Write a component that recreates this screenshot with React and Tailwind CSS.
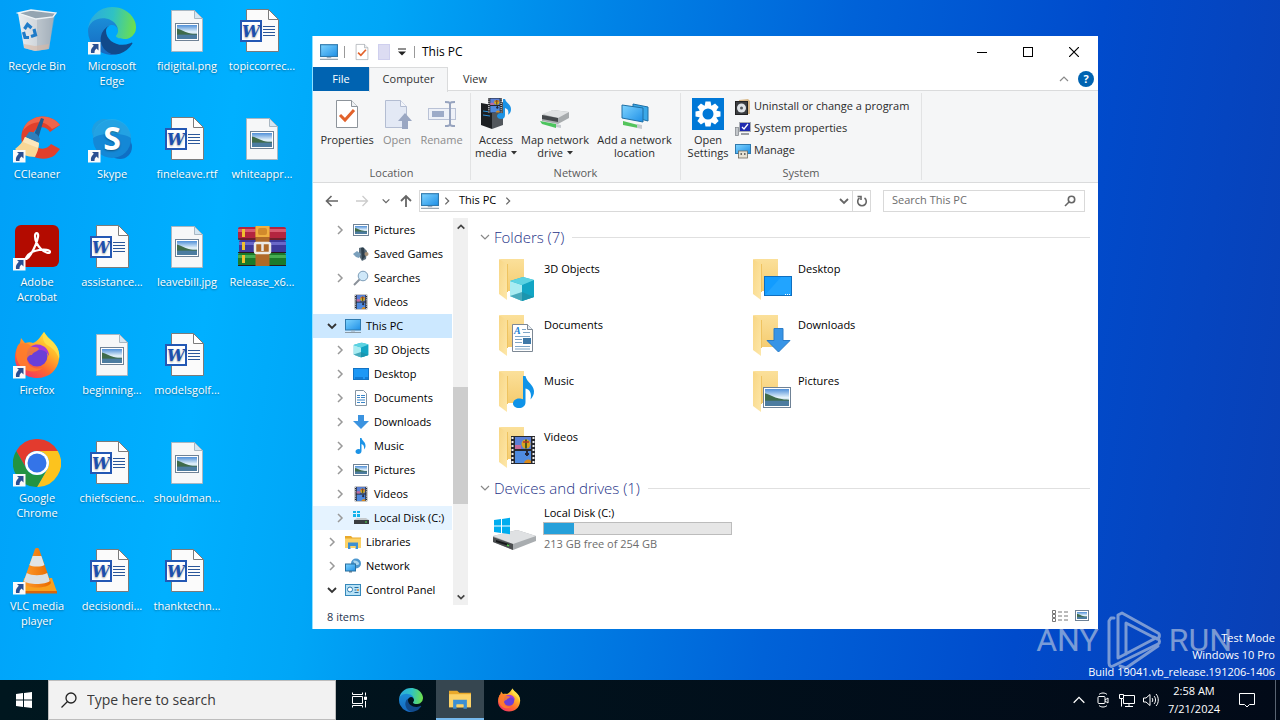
import React, { useState } from "react";

// ── Shared gradients ────────────────────────────────────────────────────────
function Gradients() {
  return (
    <svg width="0" height="0" className="absolute" aria-hidden="true">
      <defs>
        <linearGradient id="screen" x1="0" y1="0" x2="1" y2="1">
          <stop offset="0" stopColor="#7fd4ff" />
          <stop offset="1" stopColor="#1e8fe6" />
        </linearGradient>
        <linearGradient id="sky" x1="0" y1="0" x2="0" y2="1">
          <stop offset="0" stopColor="#4f8fd8" />
          <stop offset="0.5" stopColor="#e4f2fa" />
          <stop offset="1" stopColor="#7fa6c8" />
        </linearGradient>
        <linearGradient id="edgeGreen" x1="0" y1="0.4" x2="1" y2="0.5">
          <stop offset="0" stopColor="#2ba9e0" />
          <stop offset="0.5" stopColor="#2fc2c4" />
          <stop offset="1" stopColor="#6ee04a" />
        </linearGradient>
        <linearGradient id="edgeBlue" x1="0.5" y1="0" x2="0.5" y2="1">
          <stop offset="0" stopColor="#1b8fd8" />
          <stop offset="1" stopColor="#1668c0" />
        </linearGradient>
        <linearGradient id="fox" x1="0.9" y1="0" x2="0.2" y2="1">
          <stop offset="0" stopColor="#fff44f" />
          <stop offset="0.35" stopColor="#ffb52a" />
          <stop offset="0.65" stopColor="#ff6a2e" />
          <stop offset="1" stopColor="#f0306a" />
        </linearGradient>
        <linearGradient id="folderFront" x1="0" y1="0" x2="1" y2="1">
          <stop offset="0" stopColor="#f8d684" />
          <stop offset="1" stopColor="#fde7aa" />
        </linearGradient>
        <linearGradient id="folderBack" x1="0" y1="0" x2="0" y2="1">
          <stop offset="0" stopColor="#fbe09a" />
          <stop offset="1" stopColor="#f5cc70" />
        </linearGradient>
        <linearGradient id="bin" x1="0" y1="0" x2="1" y2="0">
          <stop offset="0" stopColor="#e9edf0" />
          <stop offset="0.6" stopColor="#cdd3d9" />
          <stop offset="1" stopColor="#a4b0bb" />
        </linearGradient>
        <linearGradient id="cone" x1="0" y1="0" x2="1" y2="0">
          <stop offset="0" stopColor="#ff9a2a" />
          <stop offset="1" stopColor="#e86a00" />
        </linearGradient>
      </defs>
    </svg>
  );
}

// ── Desktop icons (48 × 48) ─────────────────────────────────────────────────
function Shortcut() {
  return (
    <g>
      <rect x="0" y="35" width="12.5" height="12.5" fill="#fafafa" />
      <path d="M4 37h6.500v6.500L8.500 41.500C6.500 43 6.500 44.500 6.500 46H3c-.5-3 .5-5 2.800-7.200z" fill="#2a4f92" />
    </g>
  );
}

function RecycleIcon() {
  return (
    <svg viewBox="0 0 48 48" className="size-12">
      <path d="M5 6l36 2-5 34-14 2-11-3z" fill="url(#bin)" />
      <path d="M24 10l18-2-6 34-12 2z" fill="#9fadb8" opacity="0.45" />
      <path d="M5 6L18 3l25 3-3 4-17 2z" fill="#94a5b2" stroke="#eef3f6" strokeWidth="1.3" />
      <path d="M11 37l11 2 14-2-1 5-13 2-11-3z" fill="#d9b7a4" opacity="0.6" />
      <g fill="none" stroke="#1f7bc8" strokeWidth="3.2">
        <path d="M11.500 22l3-4.500 4 3.500" />
        <path d="M21 22l1.500 6-4.500 1.500" />
        <path d="M16 30.500h-4l-1.500-5.500" />
      </g>
    </svg>
  );
}

function EdgeIcon({ shortcut, className = "size-12" }) {
  return (
    <svg viewBox="0 0 48 48" className={className}>
      <g transform="scale(0.1875)">
        <path d="M231 190.500c-3.400 1.800-6.900 3.400-10.500 4.700a101.500 101.500 0 0 1-35.900 6.500c-47.300 0-88.500-32.500-88.500-74.300 0.100-11.400 6.300-21.900 16.300-27.400-42.800 1.800-53.800 46.400-53.800 72.500 0 74 68.100 81.400 82.800 81.400 7.900 0 19.800-2.300 27-4.600l1.300-.4a128.300 128.300 0 0 0 66.600-52.800 4 4 0 0 0-5.300-5.600z" fill="#114a8b" />
        <path d="M105.700 241.400a79.200 79.200 0 0 1-22.700-21.300 80.700 80.700 0 0 1 29.500-120c3.200-1.500 8.500-4.100 15.600-4a32.400 32.400 0 0 1 25.700 13 31.900 31.900 0 0 1 6.300 18.700c0-.2 24.500-79.600-80-79.600-43.900 0-80 41.700-80 78.200a130.200 130.200 0 0 0 12.100 56 128 128 0 0 0 156.400 67.100 75.600 75.600 0 0 1-62.800-8z" fill="url(#edgeBlue)" />
        <path d="M152.300 148.900c-.8 1-3.300 2.500-3.300 5.700 0 2.600 1.700 5.100 4.700 7.200 14.400 10 41.500 8.700 41.600 8.700 10.700 0 21.100-2.900 30.300-8.300A61.400 61.400 0 0 0 256 109.400c.3-22.400-8-37.300-11.300-43.900C223.500 23.900 177.700 0 128 0A128 128 0 0 0 0 126.200c.5-36.500 36.800-66 80-66 3.500 0 23.500.3 42 10 16.300 8.600 24.900 18.900 30.800 29.200 6.200 10.700 7.300 24.100 7.300 29.500s-2.700 13.300-7.800 20z" fill="url(#edgeGreen)" />
      </g>
      {shortcut && <Shortcut />}
    </svg>
  );
}

function CCleanerIcon() {
  return (
    <svg viewBox="0 0 48 48" className="size-12">
      <path d="M47 10C40 1 27-1 18 5 8 11 6 24 11 33c6 11 22 14 31 7l5-6-9-5c-4 6-12 6-16 1-4-5-3-13 2-16 4-3 10-2 13 3z" fill="#e0402c" />
      <path d="M47 10C40 1 27-1 18 5c-4 2-7 6-8 11 6-9 20-13 29-2z" fill="#f0654a" />
      <path d="M28 3l3 1-6 20-5-2z" fill="#1d5c92" />
      <path d="M16 17c4-1 9 2 11 7l-3 5-12-6z" fill="#2f7fbb" />
      <path d="M12 22l14 6c0 5-2 10-4 14-8 0-15-3-20-8 4-3 8-7 10-12z" fill="#f8d796" />
      <path d="M12 22l14 6-1 5-15-6z" fill="#fbe7bd" />
      <Shortcut />
    </svg>
  );
}

function SkypeIcon() {
  return (
    <svg viewBox="0 0 48 48" className="size-12">
      <circle cx="16" cy="16" r="12" fill="#1f9fe0" />
      <circle cx="32" cy="32" r="12" fill="#0f6fc4" />
      <circle cx="24" cy="24" r="19" fill="#1488d6" />
      <path d="M5 23a19 19 0 0 1 38 0c-9-6-29-6-38 0z" fill="#2aaee8" opacity="0.7" />
      <text x="24" y="35" textAnchor="middle" fontFamily="Open Sans, sans-serif" fontWeight="700" fontSize="32" fill="#fff">S</text>
      <Shortcut />
    </svg>
  );
}

function AcrobatIcon() {
  return (
    <svg viewBox="0 0 48 48" className="size-12">
      <rect x="2" y="2" width="44" height="42" rx="6" fill="#b30b00" />
      <path d="M13 35c2-4 7-7 13-8s11 0 11 2-5 1-9-3-6-9-6-13 4-4 3 1-4 12-7 17-6 6-5 4z" fill="none" stroke="#fff" strokeWidth="2.2" strokeLinejoin="round" />
      <Shortcut />
    </svg>
  );
}

function FirefoxIcon({ shortcut, className = "size-12" }) {
  return (
    <svg viewBox="0 0 48 48" className={className}>
      <path d="M31 1c2 4 6 7 9 10 5 5 7 11 6 17-1 11-10 19-22 19S2 38 2 27c0-6 2-12 5-15l1-5 4 5c3-1 6-1 8 0 5-2 7-6 11-11z" fill="url(#fox)" />
      <circle cx="24" cy="25" r="10.500" fill="#6a3fd8" />
      <path d="M14 20c3-6 10-8 16-5 4 2 6 6 6 10-2-4-5-6-8-6z" fill="#a33bd6" />
      <path d="M5 14c5-3 11-2 14 2 3 0 6 0 7 2-2 3-6 3-7 6-3 0-5 2-5 5 1 7 9 10 16 8-8 6-21 4-25-6-3-6-2-12 0-17z" fill="#ff7f2c" opacity="0.85" />
      <path d="M31 1c2 4 6 7 9 10 5 5 7 11 6 17-3-9-7-11-12-14-4-3-5-8-3-13z" fill="#ffe14a" opacity="0.85" />
      {shortcut && <Shortcut />}
    </svg>
  );
}

function ChromeIcon() {
  const blade = "M24 12H44.800A24 24 0 0 0 3.200 12L13.600 30A12 12 0 0 1 24 12z";
  return (
    <svg viewBox="0 0 48 48" className="size-12">
      <path d={blade} fill="#e33b2e" />
      <path d={blade} fill="#fcc31e" transform="rotate(120 24 24)" />
      <path d={blade} fill="#229342" transform="rotate(240 24 24)" />
      <circle cx="24" cy="24" r="12" fill="#fff" />
      <circle cx="24" cy="24" r="9.500" fill="#3474e8" />
      <Shortcut />
    </svg>
  );
}

function VlcIcon() {
  return (
    <svg viewBox="0 0 48 48" className="size-12">
      <path d="M11 31h28l5 14H9z" fill="#f9a01e" />
      <path d="M9 44h35v2.500H9z" fill="#d9660a" />
      <path d="M22 2c0-1.500 4-1.500 4 0l12 34c-3 6-25 6-28 0z" fill="url(#cone)" />
      <path d="M19.600 9h8.800l3 9c-3 2-12 2-15 0z" fill="#e2e5e6" />
      <path d="M13.800 26c5 3 15 3 20.400 0l2.600 8c-4 4-22 4-26 0z" fill="#dcdfe0" />
      <Shortcut />
    </svg>
  );
}

function RarIcon() {
  return (
    <svg viewBox="0 0 48 48" className="size-12">
      <rect x="0" y="4" width="48" height="13" rx="2" fill="#b3253f" />
      <rect x="0" y="6" width="48" height="3" fill="#d75a70" />
      <rect x="1" y="17" width="47" height="13" rx="2" fill="#3d3a9c" />
      <rect x="1" y="19" width="47" height="3" fill="#6a68c8" />
      <rect x="0" y="30" width="48" height="13" rx="2" fill="#1b7a2a" />
      <rect x="0" y="32" width="48" height="3" fill="#46ad52" />
      <path d="M0 16h48M0 29.500h48M0 42.500h48" stroke="#2a1a1a" strokeWidth="1" />
      <path d="M4 6h3v8H4zM4 19h3v8H4zM4 32h3v8H4z" fill="#f0c030" />
      <rect x="17.500" y="3" width="14" height="40" fill="#b06a28" />
      <path d="M17.500 3h14v11h-14z" fill="#f0b040" />
      <rect x="20" y="5" width="9" height="7" rx="2" fill="#d18a2c" />
      <rect x="17" y="20" width="15" height="10" rx="1.500" fill="none" stroke="#ecebe6" strokeWidth="2.500" />
      <path d="M24.500 20v8" stroke="#e8e8e8" strokeWidth="2.500" />
    </svg>
  );
}

function Landscape({ x, y, w, h }) {
  return (
    <g>
      <rect x={x} y={y} width={w} height={h} fill="#fff" stroke="#6f8296" strokeWidth="1" />
      <svg x={x + 1.5} y={y + 1.5} width={w - 3} height={h - 3} viewBox="0 0 24 16" preserveAspectRatio="none">
        <rect width="24" height="16" fill="url(#sky)" />
        <path d="M0 4c5 1 9 4 14 5 4 1 6 1 10 1v2H0z" fill="#3f6b4a" />
        <path d="M0 11h24v5H0z" fill="#4c7ca0" />
      </svg>
    </g>
  );
}

function ImageFileIcon() {
  return (
    <svg viewBox="0 0 48 48" className="size-12">
      <path d="M8.500 3.500h23l8 8v33h-31z" fill="#f6f7f8" stroke="#a9b7c2" />
      <path d="M31.500 3.500v8h8z" fill="#d5e6f2" stroke="#a9b7c2" />
      <Landscape x={12.5} y={16.5} w={23} h={17} />
    </svg>
  );
}

function WordFileIcon() {
  return (
    <svg viewBox="0 0 48 48" className="size-12">
      <path d="M8.500 2.500h22l10 10v32h-32z" fill="#fbfbfb" stroke="#7b7b7b" />
      <path d="M30.500 2.500v10h10z" fill="#fff" stroke="#7b7b7b" />
      <path d="M25 19.500h12M25 22.500h12M25 25.500h12M25 28.500h12" stroke="#2b579a" strokeWidth="1" />
      <rect x="3" y="14" width="20" height="20" fill="#fff" stroke="#2458b4" strokeWidth="2" />
      <text x="13" y="30" textAnchor="middle" fontFamily="DejaVu Serif, serif" fontStyle="italic" fontWeight="bold" fontSize="16" fill="#1d4fae">W</text>
    </svg>
  );
}

// ── Small icons (16 × 16) ───────────────────────────────────────────────────
function PcIcon({ className = "size-4" }) {
  return (
    <svg viewBox="0 0 16 16" className={className}>
      <rect x="0.500" y="1.500" width="15" height="10.500" fill="url(#screen)" stroke="#2f79ad" />
      <path d="M6 12.500h4v1H6z" fill="#9ab" />
      <path d="M0 14.500h16" stroke="#8a9aa6" />
    </svg>
  );
}

function PicturesSmall() {
  return (
    <svg viewBox="0 0 16 16" className="size-4">
      <Landscape x={0.5} y={2.5} w={15} h={11} />
    </svg>
  );
}

function GamesSmall() {
  return (
    <svg viewBox="0 0 16 16" className="size-4">
      <path d="M6 2l4-1 4 4-1 8-4 2-3-5z" fill="#5d6f7c" />
      <path d="M8 2h3l1 9-3 3z" fill="#2e3f4c" />
      <path d="M0 8l4-3 4 3-2 4-3-1z" fill="#7ba0bc" />
      <circle cx="13.500" cy="8" r="2" fill="#a58f76" />
    </svg>
  );
}

function SearchesSmall() {
  return (
    <svg viewBox="0 0 16 16" className="size-4">
      <path d="M1 15l6-6" stroke="#8a9099" strokeWidth="2" />
      <circle cx="10" cy="6" r="4.800" fill="#cfe8f9" stroke="#7d9db8" />
    </svg>
  );
}

function Film({ x, y, w, h }) {
  return (
    <svg x={x} y={y} width={w} height={h} viewBox="0 0 24 28" preserveAspectRatio="none">
      <rect width="24" height="28" fill="#26282e" />
      <path d="M1.500 1v26M22.500 1v26" stroke="#f0f0f0" strokeWidth="2" strokeDasharray="2 2" />
      <rect x="4" y="1" width="16" height="12" fill="#5a7fd6" />
      <rect x="4" y="15" width="16" height="12" fill="#4f8be0" />
      <circle cx="15" cy="8" r="4.500" fill="#d9a520" />
      <path d="M15 3.500v9" stroke="#4a5a1c" strokeWidth="2" />
      <path d="M12 6h6" stroke="#b5342c" strokeWidth="1.500" />
      <path d="M4 9h6v4H4z" fill="#c46a9a" />
      <path d="M13 27a4 4 0 0 1 7-2v2z" fill="#d98a1c" />
      <path d="M16 15v5M14 18h4" stroke="#23263c" strokeWidth="2" />
    </svg>
  );
}

function FilmSmall() {
  return (
    <svg viewBox="0 0 16 16" className="size-4">
      <Film x={1.5} y={0.5} w={13} h={15} />
    </svg>
  );
}

function Cube({ x, y, s }) {
  return (
    <svg x={x} y={y} width={s} height={s} viewBox="0 0 24 24">
      <path d="M0 4l13-4 11 3v17l-12 4-12-5z" fill="#26b4cd" />
      <path d="M0 4l12 4v16L0 19z" fill="#a8ecf2" />
      <path d="M12 8l12-5v17l-12 4z" fill="#12a5c4" />
      <path d="M0 4l13-4 11 3-12 5z" fill="#5cd3e2" />
      <path d="M0 19l12-4 12 5-12 4z" fill="#1f8fa5" opacity="0.7" />
    </svg>
  );
}

function CubeSmall() {
  return (
    <svg viewBox="0 0 16 16" className="size-4">
      <Cube x={0.5} y={0.5} s={15} />
    </svg>
  );
}

function DesktopSmall() {
  return (
    <svg viewBox="0 0 16 16" className="size-4">
      <rect x="0.500" y="2.500" width="15" height="11" fill="#1d98f5" stroke="#1272c4" />
      <path d="M2 12h8M12 12h3" stroke="#0b5eb0" />
    </svg>
  );
}

function DocumentSmall() {
  return (
    <svg viewBox="0 0 16 16" className="size-4">
      <path d="M2.500.5h8l3 3v12h-11z" fill="#fff" stroke="#8595a3" />
      <path d="M4 5.500h3M8 5.500h4M4 7.500h3M8 7.500h4M4 10h8M4 12.500h3M8 12.500h4" stroke="#3a86c8" strokeWidth="1.200" />
    </svg>
  );
}

function DownloadSmall() {
  return (
    <svg viewBox="0 0 16 16" className="size-4">
      <path d="M5 1h6v6h5l-8 8-8-8h5z" fill="#3b93e0" />
    </svg>
  );
}

function MusicSmall() {
  return (
    <svg viewBox="0 0 16 16" className="size-4">
      <path d="M7 0h1.500c.5 3 4.500 4 4 8.500-.3 1.500-.8 2-1.500 3 .5-3-.5-5-2.500-5.500V13c0 2-1.500 3-3.200 3S2.500 15 2.500 13.500 4 11 5.500 11L7 11.300z" fill="#1b93e6" />
    </svg>
  );
}

function DiskSmall() {
  return (
    <svg viewBox="0 0 16 16" className="size-4">
      <path d="M0 1h3v2H0zM4 1h3v2H4zM0 4h3v3H0zM4 4h3v3H4z" fill="#15b2ea" />
      <path d="M1 10l3-2h9l3 2z" fill="#c4c8cb" />
      <path d="M1 10h15v4H1z" fill="#3a3d40" />
      <path d="M12 12h2" stroke="#4be04b" />
    </svg>
  );
}

function FolderStand({ className = "size-4" }) {
  return (
    <svg viewBox="0 0 16 16" className={className}>
      <path d="M0 2h6l1.500 1.500H16V14H0z" fill="#e9a92b" />
      <path d="M0 4.500h16V14H0z" fill="#fcd267" />
      <path d="M3 8.500h10V15h-2.500v-3h-5v3H3z" fill="#3d8fd2" />
      <path d="M5.500 12h5v2h-5z" fill="#fcd267" />
    </svg>
  );
}

function NetworkSmall() {
  return (
    <svg viewBox="0 0 16 16" className="size-4">
      <circle cx="11" cy="5.500" r="5" fill="#4c97cf" />
      <path d="M8 3c2-1 5 0 6 2s-3 3-4 1z" fill="#a9d5ee" />
      <rect x="0.500" y="6" width="10" height="7" fill="url(#screen)" stroke="#276e9f" />
      <path d="M4 13h3v1.500H4z" fill="#5e7d93" />
    </svg>
  );
}

function PanelSmall() {
  return (
    <svg viewBox="0 0 16 16" className="size-4">
      <rect x="0.500" y="2.500" width="15" height="11" fill="#b8e2f6" stroke="#3588ba" />
      <circle cx="5" cy="7.500" r="2.500" fill="#fff" stroke="#2a7ab0" />
      <path d="M9.500 5.500h4M9.500 8h2M9.500 10.500h4" stroke="#256ea3" />
      <circle cx="13" cy="8" r="1" fill="#e08a2c" />
    </svg>
  );
}

// ── Folder tiles (48 × 48) ──────────────────────────────────────────────────
function Folder({ children }) {
  return (
    <svg viewBox="0 0 48 48" className="size-12 shrink-0">
      <path d="M7 3h24v32H12z" fill="url(#folderBack)" />
      <path d="M6 3l8 5v36l-8-6z" fill="url(#folderFront)" />
      <path d="M14.500 8v28" stroke="#efc35f" />
      {children}
    </svg>
  );
}

const overlays = {
  cube: <Cube x={17} y={21} s={24} />,
  desktop: (
    <g>
      <rect x="17.500" y="20.500" width="27" height="19" fill="#129cff" stroke="#0f6fc0" />
      <path d="M18 39l16-18h10v18z" fill="#2fabff" opacity="0.500" />
      <path d="M38 38.500h6" stroke="#fff" strokeDasharray="1 1" />
    </g>
  ),
  document: (
    <g>
      <path d="M19.500 12.500h15l5 5v22h-20z" fill="#fff" stroke="#7d8894" />
      <path d="M34.500 12.500v5h5" fill="#e8eef3" stroke="#7d8894" />
      <text x="21" y="22" fontFamily="Liberation Serif, serif" fontStyle="italic" fontWeight="bold" fontSize="10" fill="#1c7fd0">A</text>
      <path d="M29 17.500h4M30 20.500h7M22 24.500h15M22 27.500h7M22 30.500h7M22 34.500h15M22 37h15" stroke="#7fa6c6" />
      <rect x="30" y="26" width="8" height="6" fill="#3f79a8" />
    </g>
  ),
  download: <path d="M27 16.500h9v12h7L31.500 40 20 28.500h7z" fill="#3794e6" stroke="#2a7cc8" />,
  music: (
    <path d="M30 8h2.500c1 6 8 8.500 8.500 15 .2 4-1.500 6-3.500 8.500 1.500-6-.5-10-5-11V34c0 4-3 6-6.500 6S20 38 20 35.500s2.500-5 6-5c1.500 0 3 .3 4 .8z" fill="#0f93e8" />
  ),
  picture: <Landscape x={16.5} y={19.5} w={27} h={20} />,
  film: <Film x={18} y={12} w={24} h={28} />,
};

function DriveIcon() {
  return (
    <svg viewBox="0 0 48 48" className="size-12 shrink-0">
      <path d="M0 29l24-6 19 6v5L20 43 0 35z" fill="#a9adb0" />
      <path d="M0 29l24-6 19 6-23 8z" fill="#dfe1e3" />
      <path d="M0 30l20 7v6L0 35z" fill="#4b4e50" />
      <path d="M3 33l13 4v2L3 35z" fill="#17191b" />
      <path d="M14 38l2 .7" stroke="#56d24e" strokeWidth="1.500" />
      <path d="M1 13l7-1v6.500H1zM9 11.900l8-1.100v7.700H9zM1 19.500h7V26l-7-1zM9 19.500h8v7.700l-8-1.100z" fill="#00adef" />
    </svg>
  );
}

// ── Ribbon icons (32 × 32) ──────────────────────────────────────────────────
function PropertiesIcon({ className = "size-8" }) {
  return (
    <svg viewBox="0 0 32 32" className={className}>
      <path d="M5.500 2.500h15l6 6v21h-21z" fill="#fff" stroke="#8d949b" />
      <path d="M20.500 2.500v6h6" fill="#eef1f4" stroke="#8d949b" />
      <path d="M9 17l5 5 9-10" fill="none" stroke="#e2622b" strokeWidth="3" />
    </svg>
  );
}

function OpenIcon() {
  return (
    <svg viewBox="0 0 32 32" className="size-8">
      <path d="M4.500 2.500h15l6 6v21h-21z" fill="#e3e9f5" stroke="#b3bdd2" />
      <path d="M19.500 2.500v6h6" fill="#f4f6fb" stroke="#b3bdd2" />
      <path d="M24 15l7 8h-4v8h-6v-8h-4z" fill="#9aa7c2" />
    </svg>
  );
}

function RenameIcon() {
  return (
    <svg viewBox="0 0 32 32" className="size-8">
      <rect x="2.500" y="10.500" width="27" height="11" fill="#eef1f8" stroke="#b9c2d6" />
      <rect x="6" y="13" width="12" height="6" fill="#9dabc8" />
      <path d="M19 4c3 0 5 0 5 2v20c0 2-2 2-5 2M29 4c-3 0-5 0-5 2v20c0 2 2 2 5 2" fill="none" stroke="#97a4bf" strokeWidth="2" />
    </svg>
  );
}

function AccessIcon() {
  return (
    <svg viewBox="0 0 32 32" className="size-8">
      <path d="M1 5l11 2v24L1 27z" fill="#1c1f22" />
      <path d="M12 7l11-3v23l-11 4z" fill="#52575c" />
      <path d="M3 13l7 1M3 17l7 1" stroke="#2e8fd8" />
      <Film x={8} y={0} w={14} h={15} />
      <path d="M23 1h2c1 4 6 5 6 10 0 3-1 4-3 6 1-4 0-6-3-7v7c0 3-2 4-4 4s-4-1-4-3 2-3 4-3l2 .2z" fill="#1b93e6" />
    </svg>
  );
}

function MapDriveIcon() {
  return (
    <svg viewBox="0 0 32 32" className="size-8">
      <path d="M3 17l11-5 16 2v6l-11 6-16-3z" fill="#a7abad" />
      <path d="M3 16l11-4 16 2-11 6z" fill="#e1e3e4" />
      <path d="M3 17l16 3v4L3 21z" fill="#45494c" />
      <path d="M1 23l16 3v4L3 26z" fill="#4cc45e" />
      <path d="M17 26l5 1v3l-5-1z" fill="#c7cbd0" />
    </svg>
  );
}

function AddNetworkIcon() {
  return (
    <svg viewBox="0 0 32 32" className="size-8">
      <path d="M14 6l15 3v14l-15-4z" fill="#3aa8e8" stroke="#1e6fa5" />
      <path d="M3 7l21 3v14L3 20z" fill="url(#screen)" stroke="#1e6fa5" />
      <path d="M4 23l15 4v3L4 27z" fill="#54c45c" />
      <path d="M18 26l5 1v4l-5-1z" fill="#c7cbd0" />
    </svg>
  );
}

function SettingsIcon() {
  const teeth = [0, 45, 90, 135, 180, 225, 270, 315];
  return (
    <svg viewBox="0 0 32 32" className="size-8">
      <rect width="32" height="32" fill="#0078d7" />
      {teeth.map((a) => (
        <path key={a} d="M13.500 3.500h5l1 5h-7z" fill="#fff" transform={`rotate(${a} 16 16)`} />
      ))}
      <circle cx="16" cy="16" r="7.300" fill="none" stroke="#fff" strokeWidth="3.600" />
    </svg>
  );
}

function UninstallIcon() {
  return (
    <svg viewBox="0 0 16 16" className="size-4">
      <path d="M4 1l9-1 2 2v13H4z" fill="#d9b98a" />
      <rect x="0.500" y="2.500" width="12" height="13" fill="#3b3d40" stroke="#222" />
      <circle cx="6.500" cy="9" r="4.500" fill="#dfe3e6" />
      <circle cx="6.500" cy="9" r="1.500" fill="#55595d" />
    </svg>
  );
}

function SysPropsIcon() {
  return (
    <svg viewBox="0 0 16 16" className="size-4">
      <rect x="0.500" y="6.500" width="3" height="8" fill="#c2c6ca" stroke="#7d8186" strokeWidth="0.700" />
      <rect x="4.500" y="1.500" width="11" height="9" fill="#1f2bb0" stroke="#a8acb2" />
      <path d="M7 6l2 2 4-5" fill="none" stroke="#fff" strokeWidth="1.300" />
      <path d="M6 12h8v2H6z" fill="#9a9ea3" />
    </svg>
  );
}

function ManageIcon() {
  return (
    <svg viewBox="0 0 16 16" className="size-4">
      <rect x="0.500" y="1.500" width="15" height="9" fill="url(#screen)" stroke="#2f79ad" />
      <rect x="3.500" y="8" width="9" height="7" fill="#e6e2d4" stroke="#6e6a5e" strokeWidth="0.800" />
      <path d="M5.500 11H7M9 11h1.500" stroke="#444" strokeWidth="1.500" />
    </svg>
  );
}

function Chevron({ dir = "right", className = "size-3 text-[#8a8a8a]", width = 1.5 }) {
  const paths = {
    right: "M4 2l4 4-4 4",
    down: "M2 4l4 4 4-4",
    up: "M2 8l4-4 4 4",
  };
  return (
    <svg viewBox="0 0 12 12" className={className} fill="none" stroke="currentColor" strokeWidth={width}>
      <path d={paths[dir]} />
    </svg>
  );
}

// ── Data ────────────────────────────────────────────────────────────────────
const desktopItems = [
  { label: "Recycle Bin", icon: <RecycleIcon /> },
  { label: "CCleaner", icon: <CCleanerIcon /> },
  { label: "Adobe Acrobat", icon: <AcrobatIcon /> },
  { label: "Firefox", icon: <FirefoxIcon shortcut /> },
  { label: "Google Chrome", icon: <ChromeIcon /> },
  { label: "VLC media player", icon: <VlcIcon /> },
  { label: "Microsoft Edge", icon: <EdgeIcon shortcut /> },
  { label: "Skype", icon: <SkypeIcon /> },
  { label: "assistance...", icon: <WordFileIcon /> },
  { label: "beginning...", icon: <ImageFileIcon /> },
  { label: "chiefscienc...", icon: <WordFileIcon /> },
  { label: "decisiondi...", icon: <WordFileIcon /> },
  { label: "fidigital.png", icon: <ImageFileIcon /> },
  { label: "fineleave.rtf", icon: <WordFileIcon /> },
  { label: "leavebill.jpg", icon: <ImageFileIcon /> },
  { label: "modelsgolf...", icon: <WordFileIcon /> },
  { label: "shouldman...", icon: <ImageFileIcon /> },
  { label: "thanktechn...", icon: <WordFileIcon /> },
  { label: "topiccorrec...", icon: <WordFileIcon /> },
  { label: "whiteappr...", icon: <ImageFileIcon /> },
  { label: "Release_x6...", icon: <RarIcon /> },
];

const tree = [
  { label: "Pictures", icon: <PicturesSmall />, arrow: "right", nested: true },
  { label: "Saved Games", icon: <GamesSmall />, nested: true },
  { label: "Searches", icon: <SearchesSmall />, arrow: "right", nested: true },
  { label: "Videos", icon: <FilmSmall />, nested: true },
  { label: "This PC", icon: <PcIcon />, arrow: "down", state: "bg-[#cce8ff]" },
  { label: "3D Objects", icon: <CubeSmall />, arrow: "right", nested: true },
  { label: "Desktop", icon: <DesktopSmall />, arrow: "right", nested: true },
  { label: "Documents", icon: <DocumentSmall />, arrow: "right", nested: true },
  { label: "Downloads", icon: <DownloadSmall />, arrow: "right", nested: true },
  { label: "Music", icon: <MusicSmall />, arrow: "right", nested: true },
  { label: "Pictures", icon: <PicturesSmall />, arrow: "right", nested: true },
  { label: "Videos", icon: <FilmSmall />, arrow: "right", nested: true },
  { label: "Local Disk (C:)", icon: <DiskSmall />, arrow: "right", nested: true, state: "bg-[#e5f3ff]" },
  { label: "Libraries", icon: <FolderStand />, arrow: "right" },
  { label: "Network", icon: <NetworkSmall />, arrow: "right" },
  { label: "Control Panel", icon: <PanelSmall />, arrow: "down" },
];

const folders = [
  ["3D Objects", "cube"],
  ["Desktop", "desktop"],
  ["Documents", "document"],
  ["Downloads", "download"],
  ["Music", "music"],
  ["Pictures", "picture"],
  ["Videos", "film"],
];

// ── Window parts ────────────────────────────────────────────────────────────
function TitleBar() {
  return (
    <header className="flex h-[31px] items-center">
      <div className="flex items-center pl-[7px]">
        <PcIcon className="size-[18px]" />
        <span className="ml-1.5 h-3 w-px bg-[#999]" />
        <button aria-label="Properties" className="ml-2">
          <PropertiesIcon className="size-[18px]" />
        </button>
        <button aria-label="New folder" className="ml-[7px] h-4 w-3 border border-[#cfcfee] bg-[#dcdcf2]" />
        <button aria-label="Customize Quick Access Toolbar" className="ml-2">
          <svg viewBox="0 0 8 8" className="size-2">
            <path d="M0 1h8" stroke="#222" />
            <path d="M0 3.500h8l-4 4z" fill="#222" />
          </svg>
        </button>
        <span className="ml-2 h-3 w-px bg-[#999]" />
      </div>
      <h1 className="ml-[7px] text-xs">This PC</h1>
      <div className="ml-auto flex pr-px">
        <button aria-label="Minimize" className="grid h-[31px] w-[46px] place-items-center">
          <svg viewBox="0 0 10 10" className="size-2.5"><path d="M0 5.500h10" stroke="#000" /></svg>
        </button>
        <button aria-label="Maximize" className="grid h-[31px] w-[46px] place-items-center">
          <svg viewBox="0 0 10 10" className="size-2.5"><rect x="0.500" y="0.500" width="9" height="9" fill="none" stroke="#000" /></svg>
        </button>
        <button aria-label="Close" className="grid h-[31px] w-[46px] place-items-center">
          <svg viewBox="0 0 10 10" className="size-2.5"><path d="M0 0l10 10M10 0L0 10" stroke="#000" strokeWidth="1.200" /></svg>
        </button>
      </div>
    </header>
  );
}

function RibbonTabs() {
  return (
    <nav className="flex h-6 items-stretch text-[11px]">
      <button className="w-14 bg-[#0063b1] text-white">File</button>
      <button className="relative -mb-px w-[79px] border border-b-0 border-[#dadbdc] bg-[#f5f6f7] pb-0.5 text-[#333]">Computer</button>
      <button className="w-[54px] border-b border-[#dadbdc] pt-0.5 text-[#333]">View</button>
      <div className="flex flex-1 items-center justify-end gap-2 border-b border-[#dadbdc] pr-1">
        <button aria-label="Minimize the Ribbon"><Chevron dir="up" width={1.2} /></button>
        <button aria-label="Help" className="grid size-4 place-items-center rounded-full bg-[#0063b1] text-[11px] font-bold text-white">?</button>
      </div>
    </nav>
  );
}

function RibbonButton({ icon, lines, className, muted, menu }) {
  return (
    <button className={`flex flex-col items-center text-[11px] leading-[13px] whitespace-nowrap ${muted ? "text-[#8b8b8b]" : "text-[#2b2b2b]"} ${className}`}>
      <span className="mb-[3px]">{icon}</span>
      {lines.map((line, i) => (
        <span key={line} className="flex items-center gap-1">
          {line}
          {menu && i === lines.length - 1 && (
            <svg viewBox="0 0 6 4" className="h-1 w-1.5"><path d="M0 0h6L3 3.500z" fill="#333" /></svg>
          )}
        </span>
      ))}
    </button>
  );
}

function RibbonGroup({ title, children }) {
  return (
    <section className="flex flex-col border-r border-[#e2e3e4] pt-[5px]">
      <div className="flex flex-1 items-start">{children}</div>
      <h2 className="text-center text-[11px] leading-[14px] text-[#5a5a5a]">{title}</h2>
    </section>
  );
}

function Ribbon() {
  const system = [
    ["Uninstall or change a program", <UninstallIcon />],
    ["System properties", <SysPropsIcon />],
    ["Manage", <ManageIcon />],
  ];
  return (
    <div className="flex h-[92px] border-b border-[#dadbdc] bg-[#f5f6f7] pt-0.5 pb-0.5">
      <RibbonGroup title="Location">
        <RibbonButton className="w-[68px]" icon={<PropertiesIcon />} lines={["Properties"]} />
        <RibbonButton className="w-8" icon={<OpenIcon />} lines={["Open"]} muted />
        <RibbonButton className="w-[57px]" icon={<RenameIcon />} lines={["Rename"]} muted />
      </RibbonGroup>
      <RibbonGroup title="Network">
        <RibbonButton className="w-[50px]" icon={<AccessIcon />} lines={["Access", "media"]} menu />
        <RibbonButton className="w-[68px]" icon={<MapDriveIcon />} lines={["Map network", "drive"]} menu />
        <RibbonButton className="w-[91px]" icon={<AddNetworkIcon />} lines={["Add a network", "location"]} />
      </RibbonGroup>
      <RibbonGroup title="System">
        <RibbonButton className="w-[54px]" icon={<SettingsIcon />} lines={["Open", "Settings"]} />
        <ul className="w-[186px]">
          {system.map(([label, icon]) => (
            <li key={label}>
              <button className="flex h-[22px] items-center gap-[3px] pb-[5px] text-[11px] whitespace-nowrap text-[#2b2b2b]">
                {icon}
                {label}
              </button>
            </li>
          ))}
        </ul>
      </RibbonGroup>
    </div>
  );
}

function NavBar() {
  return (
    <div className="flex h-[35px] items-center pr-[13px] pl-3">
      <div className="flex items-center text-[#666]">
        <button aria-label="Back">
          <svg viewBox="0 0 14 14" className="size-3.5" fill="none" stroke="currentColor" strokeWidth="1.600"><path d="M13 7H2M6.500 2L1.500 7l5 5" /></svg>
        </button>
        <button aria-label="Forward" className="ml-4 text-[#ccc]">
          <svg viewBox="0 0 14 14" className="size-3.5" fill="none" stroke="currentColor" strokeWidth="1.300"><path d="M1 7h11M7.500 2l5 5-5 5" /></svg>
        </button>
        <button aria-label="Recent locations" className="ml-3">
          <Chevron dir="down" className="size-2.5" />
        </button>
        <button aria-label="Up" className="ml-2">
          <svg viewBox="0 0 14 14" className="size-3.5" fill="none" stroke="currentColor" strokeWidth="1.800"><path d="M7 13V2M2 7l5-5 5 5" /></svg>
        </button>
      </div>
      <div className="ml-1.5 flex h-[22px] flex-1 items-stretch border border-[#d9d9d9]">
        <div className="flex flex-1 items-center pl-px text-[11px]">
          <PcIcon className="size-[18px]" />
          <Chevron className="ml-[3px] size-2.5 text-[#666]" />
          <a href="#this-pc" className="ml-[7px]">This PC</a>
          <Chevron className="ml-[7px] size-2.5 text-[#666]" />
        </div>
        <button aria-label="Previous locations" className="grid w-4 place-items-center">
          <Chevron dir="down" className="size-3 text-[#666]" width={1.8} />
        </button>
        <button aria-label="Refresh" className="grid w-[18px] place-items-center border-l border-[#d9d9d9] text-[#666]">
          <svg viewBox="0 0 12 12" className="size-3" fill="none" stroke="currentColor" strokeWidth="1.600">
            <path d="M3.500 3a4.300 4.300 0 1 0 5 0M1.500 1.500H5v3.500" />
          </svg>
        </button>
      </div>
      <label className="ml-3 flex h-[22px] w-[202px] items-center border border-[#d9d9d9] px-2">
        <input type="text" aria-label="Search This PC" placeholder="Search This PC" className="min-w-0 flex-1 text-[11px] outline-none placeholder:text-[#6d6d6d]" />
        <svg viewBox="0 0 12 12" className="size-3" fill="none" stroke="#666" strokeWidth="1.600">
          <circle cx="7.500" cy="4.500" r="3.200" />
          <path d="M5 7l-4 4" />
        </svg>
      </label>
    </div>
  );
}

function Sidebar() {
  return (
    <aside className="flex w-[156px] shrink-0">
      <ul className="w-[139px] pb-[3px] text-[11px]">
        {tree.map((row, i) => (
          <li key={i}>
            <button className={`flex h-6 w-full items-center whitespace-nowrap ${row.nested ? "pl-[21px]" : "pl-[13px]"} ${row.state ?? ""}`}>
              <span className="mr-[7px] size-3">
                {row.arrow && (
                  <Chevron
                    dir={row.arrow}
                    className={`size-3 ${row.arrow === "down" ? "text-[#333]" : "text-[#999]"}`}
                    width={row.arrow === "down" ? 1.8 : 1.5}
                  />
                )}
              </span>
              <span className="mr-[5px]">{row.icon}</span>
              {row.label}
            </button>
          </li>
        ))}
      </ul>
      <div className="ml-px flex w-[15px] flex-col items-center bg-[#f0f0f0]">
        <button aria-label="Scroll up" className="grid h-[17px] place-items-center"><Chevron dir="up" className="size-2.5 text-[#444]" width={2} /></button>
        <div className="w-full flex-[152]" />
        <div className="w-full flex-[117] bg-[#cdcdcd]" />
        <div className="w-full flex-[84]" />
        <button aria-label="Scroll down" className="grid h-[17px] place-items-center"><Chevron dir="down" className="size-2.5 text-[#444]" width={2} /></button>
      </div>
    </aside>
  );
}

function SectionHeader({ children }) {
  return (
    <div className="flex h-6 items-center">
      <Chevron dir="down" className="size-3 text-[#888]" width={1.2} />
      <h2 className="ml-[3px] text-[15px] font-light text-[#1e3287]">{children}</h2>
      <span className="ml-2 h-px flex-1 bg-[#e0e0e0]" />
    </div>
  );
}

function Content() {
  return (
    <main className="min-w-0 flex-1 pt-[7px] pr-2 pl-[10px]">
      <SectionHeader>Folders (7)</SectionHeader>
      <ul className="mt-[3px] grid grid-cols-[repeat(auto-fill,254px)] pl-[14px]">
        {folders.map(([label, kind]) => (
          <li key={label}>
            <button className="flex h-14 w-full items-start gap-[3px] pt-1 text-left">
              <Folder>{overlays[kind]}</Folder>
              <span className="pt-[5px] text-[11px] leading-4">{label}</span>
            </button>
          </li>
        ))}
      </ul>
      <SectionHeader>Devices and drives (1)</SectionHeader>
      <button className="flex items-start gap-0.5 pt-[5px] pl-[14px] text-left">
        <span className="pt-0.5"><DriveIcon /></span>
        <span className="flex w-[189px] flex-col text-[11px] leading-4">
          <span className="pl-px">Local Disk (C:)</span>
          <span className="mt-px block h-[13px] border border-[#bcbcbc] bg-[#e6e6e6]">
            <span className="block h-full w-[16%] bg-[#26a0da]" />
          </span>
          <span className="pt-px pl-px text-[#6d6d6d]">213 GB free of 254 GB</span>
        </span>
      </button>
    </main>
  );
}

function StatusBar() {
  return (
    <footer className="flex h-6 items-center pr-[9px] pl-[14px] text-[11px] text-[#26354f]">
      8 items
      <div className="ml-auto flex items-center gap-[7px] pb-0.5">
        <button aria-label="Details view">
          <svg viewBox="0 0 16 12" className="h-3 w-4" fill="none" stroke="#777">
            <path d="M.5.500h3v3h-3zM.5 4.500h3v3h-3zM.5 8.500h3v3h-3zM6 2h4M12 2h4M6 6h4M12 6h4M6 10h4M12 10h4" />
          </svg>
        </button>
        <button aria-label="Large icons view">
          <svg viewBox="0 0 14 12" className="h-3 w-3.5"><Landscape x={0.5} y={0.5} w={13} h={10} /></svg>
        </button>
      </div>
    </footer>
  );
}

// ── Taskbar ─────────────────────────────────────────────────────────────────
function Taskbar() {
  return (
    <footer className="flex h-10 items-stretch bg-linear-to-r from-[#00171f] to-[#020a18] text-white">
      <button aria-label="Start" className="grid w-12 place-items-center">
        <svg viewBox="0 0 16 16" className="size-4" fill="#fff">
          <path d="M0 2l7-1v6.500H0zM8 .9L16 0v7.500H8zM0 8.500h7V15l-7-1zM8 8.500h8V16l-8-1z" />
        </svg>
      </button>
      <label className="flex w-72 items-center gap-2.5 border border-[#bdbdbd] bg-[#f2f2f2] px-3">
        <svg viewBox="0 0 16 16" className="size-4" fill="none" stroke="#222" strokeWidth="1.300">
          <circle cx="10" cy="6" r="5" />
          <path d="M6.500 9.500L.5 15.500" />
        </svg>
        <input type="text" aria-label="Search" placeholder="Type here to search" className="min-w-0 flex-1 text-sm outline-none placeholder:text-[#3a3a3a]" />
      </label>
      <button aria-label="Task View" className="grid w-12 place-items-center">
        <svg viewBox="0 0 16 16" className="size-4" fill="none" stroke="#fff">
          <path d="M.5.500v2h10v-2M.5 15.500v-2h10v2M.5 4.500h10v7H.5zM13.500.5v3M13.500 9v6.500" />
          <path d="M12.500 5h2v2.500h-2z" fill="#fff" />
        </svg>
      </button>
      <button aria-label="Microsoft Edge" className="ml-[3px] grid w-12 place-items-center"><EdgeIcon className="size-6" /></button>
      <button aria-label="File Explorer" className="ml-px grid w-12 place-items-center border-b-2 border-[#76b9ed] bg-[#364650]"><FolderStand className="size-[22px]" /></button>
      <button aria-label="Firefox" className="grid w-[50px] place-items-center"><FirefoxIcon className="size-6" /></button>
      <div className="ml-auto flex items-center">
        <button aria-label="Show hidden icons" className="mr-2"><Chevron dir="up" className="size-4 text-white" width={1} /></button>
        <button aria-label="Meet Now" className="mr-2">
          <svg viewBox="0 0 16 16" className="size-4" fill="none" stroke="#fff">
            <rect x="3" y="4.500" width="7" height="7" rx="1" />
            <path d="M10 8l3-2v5l-3-2M4 2.500c2-2 6-2 8 0M4 13.500c2 2 6 2 8 0" />
          </svg>
        </button>
        <button aria-label="Network" className="mr-2">
          <svg viewBox="0 0 16 16" className="size-4" fill="none" stroke="#fff">
            <path d="M5 3.500h10.500v8H4.500V7M.5 2.500h4v4h-4zM2.500 6.500v8M6 14.500h8M10 11.500v3" />
          </svg>
        </button>
        <button aria-label="Volume">
          <svg viewBox="0 0 16 16" className="size-4" fill="none" stroke="#fff">
            <path d="M.5 6h2.500l4-3.500v11L3 10H.5zM9 6c1 1 1 3 0 4M11 4c2 2 2 6 0 8M13 2c3 3 3 9 0 12" />
          </svg>
        </button>
        <button className="w-[70px] text-center text-[11px] leading-[18px]">
          2:58 AM
          <br />
          7/21/2024
        </button>
        <button aria-label="Notifications" className="mr-5 ml-2.5">
          <svg viewBox="0 0 16 16" className="size-4" fill="none" stroke="#fff">
            <path d="M.5 1.500h15v11h-5L8 15l-2.500-2.500h-5z" />
          </svg>
        </button>
        <button aria-label="Show desktop" className="h-10 w-[5px] border-l border-[#5a6472]" />
      </div>
    </footer>
  );
}

// Translucent overlay in the lower-right corner
function Watermark() {
  return (
    <div className="pointer-events-none absolute right-12 bottom-2.5 flex items-center gap-[7px] font-['Liberation_Sans_Narrow','Roboto',sans-serif] text-[32px] leading-none text-[#c8d2e2] opacity-60">
      <span>ANY</span>
      <svg viewBox="0 0 56 60" className="h-[60px] w-14" fill="none" stroke="currentColor" strokeWidth="3" strokeLinejoin="round" strokeLinecap="round">
        <path d="M8 8H5L3 11v42c0 3 2 4 4 3l45-22c2-1 2-4 0-5l-4-2" />
        <path d="M20 44V13l31 16c3-1 3-5 1-6L16 3l-4 2v43l36-19" />
        <path d="M14 56l6 2 32-22" />
      </svg>
      <span>RUN</span>
    </div>
  );
}

export default function App() {
  const [selected, setSelected] = useState(null);
  return (
    <div className="flex min-h-screen flex-col overflow-hidden bg-[linear-gradient(98deg,#009ff7_0%,#00b0ff_18%,#00a6f7_28%,#0082e6_45%,#0062d8_62%,#004bcc_80%,#0a3fb4_100%)] font-['Open_Sans','Noto_Sans',sans-serif] text-black">
      <Gradients />
      <div className="relative flex-1">
        <div className="grid w-[300px] grid-flow-col grid-cols-4 grid-rows-6 text-white">
          {desktopItems.map((item) => (
            <button
              key={item.label}
              onClick={() => setSelected(item.label)}
              className={`flex h-[108px] w-[74px] flex-col items-center pt-[7px] text-[11px] leading-[15px] [text-shadow:0_1px_2px_rgba(0,0,0,0.4)] ${selected === item.label ? "bg-white/20" : ""}`}
            >
              {item.icon}
              <span className="mt-[3px] px-1">{item.label}</span>
            </button>
          ))}
        </div>

        <div className="absolute top-9 right-[182px] left-[312px] border-l border-[#8fe0ff] bg-white">
          <TitleBar />
          <RibbonTabs />
          <Ribbon />
          <NavBar />
          <div className="flex">
            <Sidebar />
            <Content />
          </div>
          <StatusBar />
        </div>

        <Watermark />
        <p className="absolute right-[5px] bottom-0 text-right text-[11px] leading-[17px] text-white">
          Test Mode
          <br />
          Windows 10 Pro
          <br />
          Build 19041.vb_release.191206-1406
        </p>
      </div>
      <Taskbar />
    </div>
  );
}
